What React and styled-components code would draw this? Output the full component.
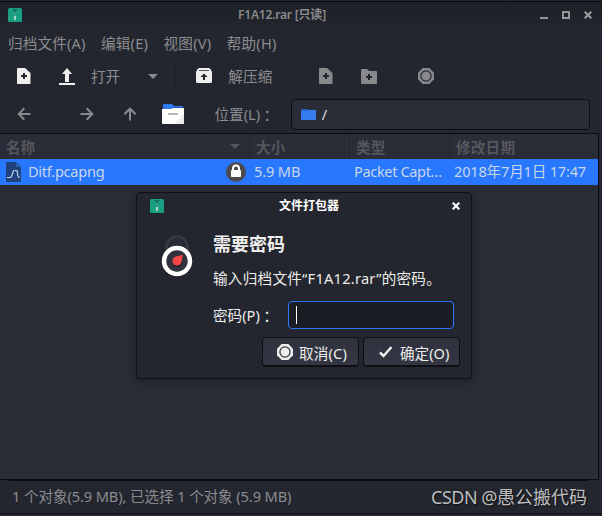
import styled, {createGlobalStyle, css} from "styled-components";

const GlobalStyle = createGlobalStyle`
  * {
    box-sizing: border-box;
  }

  body {
    margin: 0;
    overflow: hidden;
    background: #20232b;
    font-family: "Noto Sans", "Noto Sans CJK SC", sans-serif;
    font-size: 14.6px;
    color: #8b8c8f;
  }

  svg {
    display: block;
    flex: none;
  }
`;

const Window = styled.div`
  position: relative;
  width: 602px;
  height: 516px;
  display: flex;
  flex-direction: column;
  background: #23262e;
`;

const Label = styled.span`
  display: inline-block;
  flex: none;
  white-space: pre;
  line-height: 20px;
  letter-spacing: ${(props) => props.$spacing || 0}px;
`;

// full-width colon centred in its cell
const Colon = styled.span`
  font-family: "Noto Sans CJK JP", sans-serif;
  line-height: 1;
  vertical-align: -1px;
`;

const TitleBar = styled.header`
  height: 30px;
  flex: none;
  display: grid;
  grid-template-columns: 72px 1fr 108px;
  align-items: center;
  padding: 0 10px 1px 8px;
  border-top: 1px solid #23262c;
  box-shadow: inset 0 1px 0 #090a0d;
  background: linear-gradient(#1d2026, #23262e);
`;

const WindowTitle = styled.h1`
  margin: 0;
  text-align: center;
  font-size: 12px;
  line-height: 20px;
  font-weight: 600;
  letter-spacing: ${(props) => props.$spacing || 0}px;
  color: ${(props) => props.$color || "#8b8c8f"};
`;

const WindowControls = styled.div`
  display: flex;
  justify-content: flex-end;
  gap: 14px;
`;

const MenuBar = styled.nav`
  height: 26px;
  flex: none;
  display: flex;
  align-items: center;
  padding-left: 8px;
  gap: 15.5px;
`;

const Toolbar = styled.div`
  height: 39px;
  flex: none;
  display: flex;
  align-items: center;
  border-top: 1px solid #20232a;
  padding-left: 16px;
`;

const Space = styled.span`
  flex: none;
  width: ${(props) => props.$width}px;
`;

const Divider = styled.span`
  flex: none;
  width: 1px;
  height: 29px;
  background: #1f2128;
`;

const LocationBar = styled.div`
  height: 38px;
  flex: none;
  display: flex;
  align-items: center;
  padding-left: 16px;
`;

const LocationField = styled.div`
  width: 299px;
  height: 31px;
  display: flex;
  align-items: center;
  gap: 6px;
  padding-left: 9px;
  border: 1px solid #0c0e12;
  border-radius: 4px;
  background: #2a2c37;
  color: #dddddc;
`;

const FileList = styled.main`
  width: 599px;
  height: 347px;
  flex: none;
  background: #2a2c37;
  border: solid #0b0c10;
  border-width: 1px 1px 1px 0;
`;

const columns = css`
  display: grid;
  grid-template-columns: 250px 100px 100px 148px;
  align-items: center;
`;

const ListHeader = styled.div`
  ${columns};
  height: 25px;
  color: #55575d;
  font-weight: 700;
`;

const HeaderCell = styled.div`
  height: 25px;
  display: flex;
  align-items: center;
  justify-content: space-between;
  padding: 0 9px 0 6px;
  border-right: ${(props) => (props.$last ? "none" : "1px solid #23252e")};
`;

const FileRow = styled.div`
  ${columns};
  height: 26px;
  background: #2777ff;
  color: #c9d5e9;
`;

const Cell = styled.div`
  display: flex;
  align-items: center;
  padding: 0 0 2px 4px;
`;

const NameCell = styled(Cell)`
  justify-content: space-between;
  padding: 0 4px 0 5px;
`;

const FileName = styled.div`
  display: flex;
  align-items: center;
  gap: 6px;

  span {
    margin-bottom: 2px;
  }
`;

const Rule = styled.div`
  height: 1px;
  flex: none;
  margin: 0 14px 0 9px;
  background: #0b0c10;
`;

const StatusBar = styled.footer`
  height: 33px;
  flex: none;
  display: flex;
  align-items: center;
  justify-content: space-between;
  padding: 0 15px 3px 12px;
  border-bottom: 1px solid #111318;
`;

const Watermark = styled(Label)`
  margin-top: 3px;
  font-size: 18px;
  line-height: 24px;
  color: #bdbec0;
  text-shadow: 1px 1px 1px #111;
`;

const Dialog = styled.section`
  position: absolute;
  left: 136px;
  top: 192px;
  width: 336px;
  height: 187px;
  border: 1px solid #0e1014;
  border-radius: 5px 5px 2px 2px;
  background: #23262e;
  box-shadow: 0 2px 9px rgba(0, 0, 0, 0.35);
  color: #eeeeec;
`;

const DialogBar = styled.header`
  height: 27px;
  display: grid;
  grid-template-columns: 63px 1fr 55px;
  align-items: center;
  padding: 0 11px 1px 13px;
`;

const DialogBody = styled.div`
  display: flex;
  padding: 13px 0 0 24px;
  gap: 20px;
`;

const DialogForm = styled.div`
  display: flex;
  flex-direction: column;
`;

const DialogHeading = styled.h2`
  margin: -1px 0 0;
  font-size: 18px;
  line-height: 24px;
  font-weight: 700;
`;

const DialogText = styled.p`
  margin: 12px 0 0;
  line-height: 20px;
  letter-spacing: 0.25px;
  white-space: nowrap;
`;

const PasswordRow = styled.label`
  display: flex;
  align-items: center;
  justify-content: space-between;
  width: 241px;
  margin-top: 13px;
`;

const PasswordField = styled.span`
  width: 166px;
  height: 28px;
  display: flex;
  align-items: center;
  padding-left: 7px;
  border: 1px solid #2777ff;
  border-radius: 4px;
  background: #1b1d24;
`;

const Caret = styled.span`
  width: 1px;
  height: 18px;
  background: #ffffff;
`;

const DialogActions = styled.div`
  display: flex;
  justify-content: flex-end;
  gap: 4px;
  padding: 8px 11px 0 0;
`;

const DialogButton = styled.button`
  width: 97px;
  height: 30px;
  display: flex;
  align-items: center;
  gap: 6px;
  padding: 0 0 0 14px;
  border: 1px solid #0d0f13;
  border-bottom-width: 2px;
  border-radius: 4px;
  background: linear-gradient(#2f323e, #343743);
  color: #eeeeec;
  font: inherit;

  span {
    margin-top: 3px;
  }
`;

function ArchiveIcon() {
    return (
        <svg width="14" height="14" viewBox="0 0 14 14">
            <rect width="14" height="14" rx="1.5" fill="#1a9f82"/>
            <path d="M4.5 1h5L7 5z" fill="#147a66"/>
            <path d="M5 1l2 3 2-3" fill="none" stroke="#126453" strokeDasharray="1 1"/>
            <path d="M7 4v4" stroke="#4c9f8b"/>
            <rect x="6" y="8" width="2" height="4" fill="#a9d3c6"/>
        </svg>
    );
}

function CloseIcon({color = "#96979a"}) {
    return (
        <svg width="8" height="8" viewBox="0 0 8 8">
            <path d="M.7.7l6.6 6.6M7.3.7L.7 7.3" stroke={color} strokeWidth="2.2"/>
        </svg>
    );
}

function MinimizeIcon() {
    return (
        <svg width="8" height="8" viewBox="0 0 8 8">
            <path d="M0 7h8" stroke="#96979a" strokeWidth="2"/>
        </svg>
    );
}

function MaximizeIcon() {
    return (
        <svg width="8" height="8" viewBox="0 0 8 8">
            <path d="M1 1h6v6H1z" fill="none" stroke="#96979a" strokeWidth="2"/>
        </svg>
    );
}

function NewFileIcon({color = "#eeeeec"}) {
    return (
        <svg width="16" height="16" viewBox="0 0 16 16">
            <path d="M2 0h7l5.5 5v10.2q0 .8-.8.8H1.800q-.8 0-.8-.8V1q0-1 1-1z" fill={color}/>
            <path d="M8 5v6M5 8h6" stroke="#23262e" strokeWidth="2"/>
        </svg>
    );
}

function NewFolderIcon() {
    return (
        <svg width="16" height="16" viewBox="0 0 16 16">
            <path d="M1 1h5l2 2h7q1 0 1 1v11q0 1-1 1H1q-1 0-1-1V2q0-1 1-1z" fill="#88898c"/>
            <path d="M8 6v6M5 9h6" stroke="#23262e" strokeWidth="2"/>
        </svg>
    );
}

function OpenIcon() {
    return (
        <svg width="16" height="17" viewBox="0 0 16 17">
            <path d="M8 0l5 6h-3v8H6V6H3zM0 15h16v2H0z" fill="#eeeeec"/>
        </svg>
    );
}

function ExtractIcon() {
    return (
        <svg width="16" height="16" viewBox="0 0 16 16">
            <path d="M3 0h10q1 0 2 2l1 2v9.5q0 1.5-1.5 1.5h-13Q0 15 0 13.5V4l1-2q1-2 2-2z" fill="#eeeeec"/>
            <path d="M3 2.5h10" stroke="#55575c"/>
            <path d="M8 5.5l3.5 3.5H9v3H7V9H4.5z" fill="#23262e"/>
        </svg>
    );
}

function StopIcon({color = "#88898c", hole = "#23262e"}) {
    return (
        <svg width="16" height="16" viewBox="0 0 16 16">
            <path d="M4.7 0h6.6L16 4.7v6.6L11.3 16H4.700L0 11.3V4.700z" fill={color}/>
            <circle cx="8" cy="8" r="5.1" fill="none" stroke={hole} strokeWidth="1.2"/>
        </svg>
    );
}

function ArrowIcon({rotate = 0}) {
    return (
        <svg width="14" height="14" viewBox="0 0 14 14">
            <path
                d="M7.3 1.3L1.7 7l5.6 5.7M2 7h11.5"
                transform={`rotate(${rotate} 7 7)`}
                fill="none"
                stroke="#88898c"
                strokeWidth="2"
            />
        </svg>
    );
}

function DropdownIcon({color = "#88898c"}) {
    return (
        <svg width="10" height="5" viewBox="0 0 10 5">
            <path d="M0 0h10L5 5z" fill={color}/>
        </svg>
    );
}

function HomeFolderIcon() {
    return (
        <svg width="22" height="20" viewBox="0 0 22 20">
            <path d="M1 1q0-1 1-1h8l2 2h9v5H1z" fill="#3079ed"/>
            <path d="M11 3h10v1H10z" fill="#1554b0"/>
            <path d="M0 5h9l2-1h11v15q0 1-1 1H1q-1 0-1-1z" fill="#fefefe"/>
            <path d="M22 10v9q0 1-1 1h-9z" fill="#ebebeb"/>
            <rect x="6" y="9" width="10" height="2" rx="1" fill="#b7b7b7"/>
        </svg>
    );
}

function FolderIcon() {
    return (
        <svg width="15" height="11" viewBox="0 0 15 11">
            <path d="M0 1q0-1 1-1h5l1.5 1H14v4H0z" fill="#2666cc"/>
            <path d="M0 2h6l1-1h8v9q0 1-1 1H1q-1 0-1-1z" fill="#367bf0"/>
        </svg>
    );
}

function CaptureFileIcon() {
    return (
        <svg width="17" height="20" viewBox="0 0 17 20">
            <path d="M1 0h10l5 5v14q0 1-1 1H2q-1 0-1-1z" fill="#20427c"/>
            <path d="M11 0l5 5h-5z" fill="#315fac"/>
            <path
                d="M2 15.5h3q1.5 0 2-2l.8-3q.5-2 2-2H12l.8 5q.3 2 2.200 2"
                fill="none"
                stroke="#c5d2e5"
                strokeWidth="1.2"
            />
        </svg>
    );
}

function LockIcon() {
    return (
        <svg width="20" height="20" viewBox="0 0 20 20">
            <circle cx="10" cy="10" r="10" fill="#4c4c50"/>
            <path d="M7 9V6.5a3 3 0 016 0V9" fill="none" stroke="#fff" strokeWidth="2"/>
            <rect x="5" y="8" width="10" height="7" rx=".7" fill="#fff"/>
        </svg>
    );
}

function PadlockIcon() {
    return (
        <svg width="32" height="44" viewBox="0 0 32 44">
            <path d="M5.5 18v-4a10.5 10.5 0 0121 0v4" fill="none" stroke="#363943" strokeWidth="2.5"/>
            <path d="M7 18v-4a9 9 0 0118 0v4z" fill="#282b34"/>
            <circle cx="16" cy="28.5" r="15.3" fill="#16181d"/>
            <circle cx="16" cy="28" r="13" fill="#30333e" stroke="#ffffff" strokeWidth="4.5"/>
            <circle cx="16.5" cy="29" r="5" fill="#1d1f26"/>
            <circle cx="16" cy="28" r="4.6" fill="#f64545"/>
            <path d="M14.5 23.800l7.500-2-1.700 7.400z" fill="#f64545"/>
        </svg>
    );
}

function CheckIcon() {
    return (
        <svg width="16" height="16" viewBox="0 0 16 16">
            <path d="M2 8.5l3.5 3.5 8-9" fill="none" stroke="#eeeeec" strokeWidth="2.5"/>
        </svg>
    );
}

function PasswordDialog() {
    return (
        <Dialog>
            <DialogBar>
                <ArchiveIcon/>
                <WindowTitle $color="#ffffff">文件打包器</WindowTitle>
                <WindowControls>
                    <CloseIcon color="#ffffff"/>
                </WindowControls>
            </DialogBar>
            <DialogBody>
                <PadlockIcon/>
                <DialogForm>
                    <DialogHeading>需要密码</DialogHeading>
                    <DialogText>输入归档文件“F1A12.rar”的密码。</DialogText>
                    <PasswordRow>
                        <Label>密码(P)<Colon>：</Colon></Label>
                        <PasswordField>
                            <Caret/>
                        </PasswordField>
                    </PasswordRow>
                </DialogForm>
            </DialogBody>
            <DialogActions>
                <DialogButton>
                    <StopIcon color="#eeeeec" hole="#30333e"/>
                    <Label $spacing={0.15}>取消(C)</Label>
                </DialogButton>
                <DialogButton>
                    <CheckIcon/>
                    <Label>确定(O)</Label>
                </DialogButton>
            </DialogActions>
        </Dialog>
    );
}

function App() {
    return (
        <Window>
            <GlobalStyle/>
            <TitleBar>
                <ArchiveIcon/>
                <WindowTitle $spacing={-0.2}>F1A12.rar [只读]</WindowTitle>
                <WindowControls>
                    <MinimizeIcon/>
                    <MaximizeIcon/>
                    <CloseIcon/>
                </WindowControls>
            </TitleBar>
            <MenuBar>
                <Label $spacing={0.15}>归档文件(A)</Label>
                <Label $spacing={0.2}>编辑(E)</Label>
                <Label $spacing={0.2}>视图(V)</Label>
                <Label $spacing={0.2}>帮助(H)</Label>
            </MenuBar>
            <Toolbar>
                <NewFileIcon/>
                <Space $width={27}/>
                <OpenIcon/>
                <Space $width={16}/>
                <Label>打开</Label>
                <Space $width={28}/>
                <DropdownIcon/>
                <Space $width={17}/>
                <Divider/>
                <Space $width={20}/>
                <ExtractIcon/>
                <Space $width={16}/>
                <Label $spacing={0.2}>解压缩</Label>
                <Space $width={25}/>
                <Divider/>
                <Space $width={19}/>
                <NewFileIcon color="#88898c"/>
                <Space $width={27}/>
                <NewFolderIcon/>
                <Space $width={20}/>
                <Divider/>
                <Space $width={20}/>
                <StopIcon/>
            </Toolbar>
            <LocationBar>
                <Space $width={1}/>
                <ArrowIcon/>
                <Space $width={49}/>
                <ArrowIcon rotate={180}/>
                <Space $width={29}/>
                <ArrowIcon rotate={90}/>
                <Space $width={25}/>
                <HomeFolderIcon/>
                <Space $width={17}/>
                <Divider/>
                <Space $width={12.5}/>
                <Label>位置(L)<Colon>：</Colon></Label>
                <Space $width={16}/>
                <LocationField>
                    <FolderIcon/>
                    <Label>/</Label>
                </LocationField>
            </LocationBar>
            <FileList>
                <ListHeader>
                    <HeaderCell>
                        <Label>名称</Label>
                        <DropdownIcon color="#55575d"/>
                    </HeaderCell>
                    <HeaderCell>
                        <Label $spacing={0.2}>大小</Label>
                    </HeaderCell>
                    <HeaderCell>
                        <Label $spacing={0.2}>类型</Label>
                    </HeaderCell>
                    <HeaderCell $last>
                        <Label $spacing={0.2}>修改日期</Label>
                    </HeaderCell>
                </ListHeader>
                <FileRow>
                    <NameCell>
                        <FileName>
                            <CaptureFileIcon/>
                            <Label $spacing={-0.28}>Ditf.pcapng</Label>
                        </FileName>
                        <LockIcon/>
                    </NameCell>
                    <Cell>
                        <Label $spacing={-0.15}>5.9 MB</Label>
                    </Cell>
                    <Cell>
                        <Label $spacing={-0.38}>Packet Capt…</Label>
                    </Cell>
                    <Cell>
                        <Label $spacing={-0.2}>2018年7月1日 17:47</Label>
                    </Cell>
                </FileRow>
            </FileList>
            <Rule/>
            <StatusBar>
                <Label $spacing={-0.1}>1 个对象(5.9 MB), 已选择 1 个对象 (5.9 MB)</Label>
                <Watermark>
                    <Label $spacing={-0.5}>CSDN @</Label>愚公搬代码
                </Watermark>
            </StatusBar>
            <PasswordDialog/>
        </Window>
    );
}

export default App;
